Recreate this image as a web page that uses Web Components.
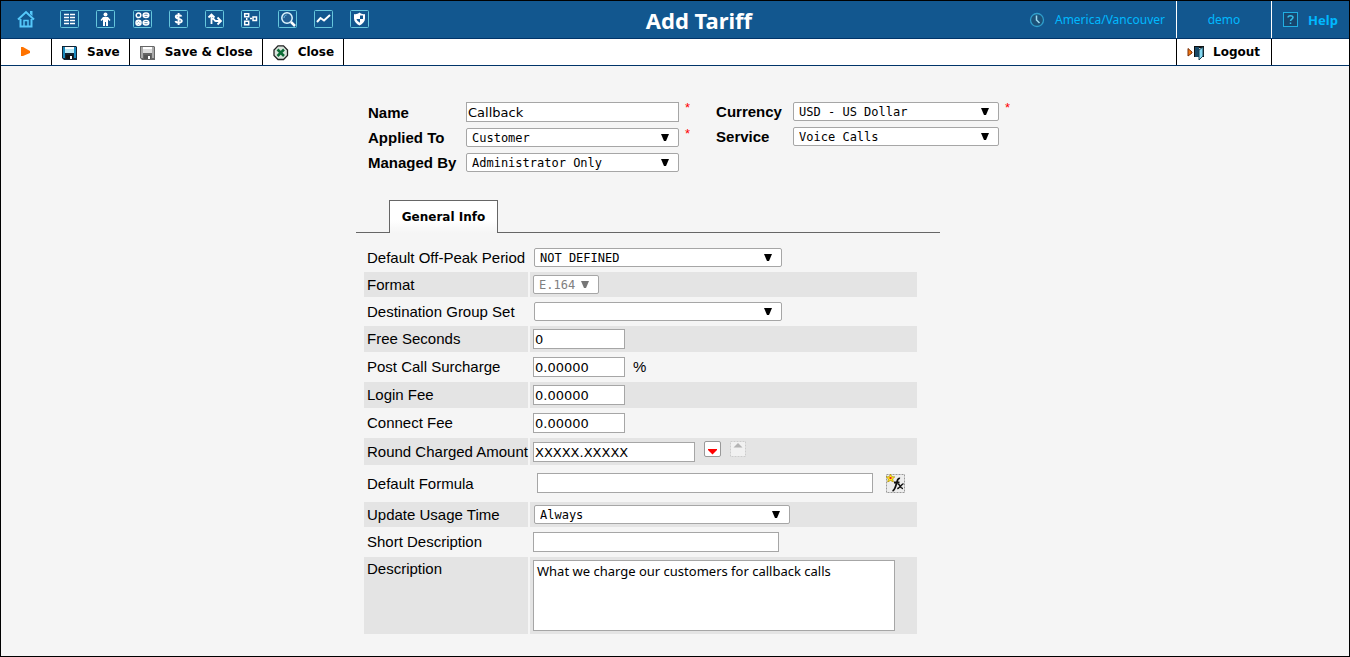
<!DOCTYPE html>
<html lang="en">
<head>
<meta charset="utf-8">
<title>Add Tariff</title>
<style>
body{margin:0;font-family:"Liberation Sans",sans-serif;color:#000}
</style>
</head>
<body>
<tariff-page></tariff-page>
<script>
const S='stroke="#fff" fill="none"';
const BOX='<rect x=".5" y=".5" width="18" height="17" rx="1" fill="none" stroke="#66c6dc"/>';
const ICONS={
 home:[18,18,'<g fill="none" stroke="#55c8fa" stroke-width="2"><path d="M1 9.500 9 2l8 7.500M3.500 9v7.500h11V9"/><path d="M7 16v-5.500h4V16" stroke-width="1.500"/></g><path d="M13 1h2.500v5L13 4z" fill="#55c8fa"/>'],
 list:[19,18,BOX+`<path d="M4 4.500h5M4 7.500h5M4 10.500h5M4 13.500h5M10 4.500h5M10 7.500h5M10 10.500h5M10 13.500h5" stroke-width="1.500" ${S}/>`],
 person:[19,18,BOX+'<circle cx="9.500" cy="4.500" r="2" fill="#fff"/><path d="M7 7h5l2.500 3-1 1L12 9.500V16h-2v-4H9v4H7V9.500L5.500 11l-1-1z" fill="#fff"/>'],
 modules:[19,18,BOX+`<g ${S} stroke-width="1.500"><circle cx="5.500" cy="5.300" r="2.300"/><ellipse cx="13" cy="5.300" rx="2.800" ry="2.200"/><circle cx="5.500" cy="12.800" r="2.500"/><ellipse cx="13" cy="12.800" rx="2.800" ry="2.200"/><path d="M11 5.300h4M11 12.800h4M4 11.300l3 3M7 11.300l-3 3"/></g>`],
 money:[19,18,BOX+`<path d="M12.500 6.500C12 5 7 4.600 6.800 6.700c0 2.700 6 1.500 6 4.200 0 2.500-5.800 2.200-6.300.2M9.600 3v12" stroke-width="1.900" ${S}/>`],
 route:[19,18,BOX+`<path d="M6.500 14V5M3.500 7.500l3-3 3 3M7 8.500c3 0 2 2.500 4 2.500h4M12.500 7.500 16 11l-3.500 3.500" stroke-width="1.800" ${S}/>`],
 network:[19,18,BOX+`<g ${S} stroke-width="1.500"><path d="M3.700 3.700h4v3h-4zM3.700 11.200h4v3.500h-4zM12 7h3.500v3.500H12zM5.700 8v2M9 8.500h2"/></g>`],
 search:[19,18,BOX+'<circle cx="9" cy="8" r="5.200" stroke="#dff6ff" stroke-width="1.500" fill="#245f94"/><path d="m13 12 4 4" stroke="#fff" stroke-width="2.500"/><path d="M6 8c.2-2 1-2.700 2.500-3" stroke="#7ac8e8" fill="none"/>'],
 chart:[19,18,BOX+`<path d="m3 12 3.500-4 3.500 2.500L16 5" stroke-width="2" ${S}/>`],
 shield:[19,18,BOX+'<path d="M9.500 2.500C8 4 5.500 4.500 4 4v4.500c0 3 2.500 5.500 5.500 7 3-1.500 5.500-4 5.500-7V4c-1.500.5-4 0-5.500-1.500z" fill="#fff"/><path d="M10 5.500h3V9h-3zM6.500 9H10v3.800C8 11.500 6.800 10.500 6.500 9z" fill="#12578f"/>'],
 clock:[16,16,'<circle cx="8" cy="8" r="6.500" fill="#1c5279" stroke="#2f9fcc" stroke-width="1.300"/><path d="M7.500 3.500V8l3 3" fill="none" stroke="#9cdcf2" stroke-width="1.500"/>'],
 help:[15,15,'<rect x=".5" y=".5" width="14" height="14" fill="#17466f" stroke="#21aee2"/><path d="M5 5.500C5 3 10 3 10 5.500c0 1.500-2.500 1.700-2.500 3.500M7.500 10.500v1.500" fill="none" stroke="#35bde9" stroke-width="1.500"/>'],
 play:[11,10,'<path d="M1 0h2l7 4v2l-7 3H1z" fill="#ff7300"/>'],
 save:[16,16,'<path d="M0 1h14l1 1v13H2l-2-2z" fill="#123"/><path d="M1 2h2v11H1z" fill="#1789bd"/><path d="M12 2h2v11h-2z" fill="#1689c0"/><path d="M3 2h9v6H3z" fill="#b9e9f6"/><path d="M3 2h9v2H3z" fill="#fff"/><path d="M4 10h7v4H4z" fill="#111"/><path d="M8 11h2v3H8z" fill="#fff"/>'],
 savegray:[16,16,'<path d="M0 1h14l1 1v13H2l-2-2z" fill="#666"/><path d="M1 2h2v11H1zM12 2h2v11h-2z" fill="#aaa"/><path d="M3 2h9v6H3z" fill="#ddd"/><path d="M3 2h9v2H3z" fill="#fff"/><path d="M4 10h7v4H4z" fill="#555"/><path d="M8 11h2v3H8z" fill="#fff"/>'],
 close:[16,16,'<path d="M5 .8h5.500L14.500 5v5.500l-4 4H5l-4-4V5z" fill="#d9e4dc" stroke="#222" stroke-width="1.300"/><path d="m4.500 4.500 6.500 6.500M11 4.500 4.500 11" stroke="#0b6b35" stroke-width="2.500"/>'],
 logout:[17,16,'<path d="M1 3.500 5 7v1L1 11z" fill="#f47812" stroke="#792e07"/><path d="M7 1h10v11h-2V3h-2L9 5v7H7z" fill="#111"/><path d="M8 2h4v10H8z" fill="#174968"/><path d="M12 5l4-3v9l-4 4z" fill="#84d8f1" stroke="#1a4354"/>'],
 down:[17,17,'<rect x=".5" y=".5" width="16" height="15" rx="1.500" fill="#fff" stroke="#999"/><path d="M4 8h9v1l-4.500 4.500L4 9z" fill="#f00"/>'],
 up:[16,17,'<rect x=".5" y=".5" width="15" height="15" fill="#f1f1f1" stroke="#ccc" stroke-dasharray="2 1"/><path d="m8 2 4.500 4.500h-9z" fill="#b4b4b4"/>'],
 fx:[19,19,'<rect x=".5" y=".5" width="18" height="18" fill="#ededed" stroke="#999" stroke-dasharray="2 1"/><path d="M4.500 0l1.300 2.700 3 .2-2.200 2 .8 3-2.900-1.500L1.700 8l.7-3L.2 2.900l3-.2z" fill="#fe2" stroke="#a80" stroke-width=".7"/><path d="M3.500 3h2v2h-2z" fill="#e22"/><path d="M14 4.500c-4-1.500-3 11-7.500 12.500M8 8.500h5.500" stroke="#111" stroke-width="1.800" fill="none"/><path d="M11.500 10c3-1 2 5 5.500 4.500M17.500 9.800c-2 0-4 5-6.300 4.700" stroke="#111" stroke-width="1.500" fill="none"/>']
};
const icon=n=>{const[w,h,d]=ICONS[n];return `<svg aria-hidden="true" width="${w}" height="${h}" viewBox="0 0 ${w} ${h}">${d}</svg>`};
const define=(name,render)=>customElements.define(name,class extends HTMLElement{
  connectedCallback(){
    if(this.shadowRoot)return;
    const t=document.createElement('template');
    t.innerHTML=render(this);
    this.attachShadow({mode:'open'}).append(t.content.cloneNode(true));
  }
});
const esc=v=>(v||'').replace(/&/g,'&amp;').replace(/"/g,'&quot;');

define('nav-icon',e=>`<style>:host{display:block}a{display:block}svg{display:block}</style>
<a href="#" aria-label="${esc(e.getAttribute('label'))}">${icon(e.getAttribute('icon'))}</a>`);

define('tool-button',e=>`<style>
:host{display:block}
button{display:flex;align-items:center;gap:9px;height:100%;margin:0;border:0;padding:1px 9px 0 10px;background:none;font:bold 12px/17px "DejaVu Sans",sans-serif;color:#000;white-space:nowrap}
svg{display:block}
</style><button type="button">${icon(e.getAttribute('icon'))}<slot></slot></button>`);

define('icon-button',e=>`<style>:host{display:block}button{display:block;border:0;margin:0;padding:0;background:none}svg{display:block}</style>
<button type="button" aria-label="${esc(e.getAttribute('label'))}"${e.hasAttribute('disabled')?' disabled':''}>${icon(e.getAttribute('icon'))}</button>`);

define('top-bar',e=>`<style>
:host{display:flex;height:37px;background:#12578f;border-bottom:1px solid #003469;font:12px/18px "Noto Sans",sans-serif;color:#00b9ff}
nav{display:flex;align-items:center;gap:25px;padding:0 0 2px 16px}
.main{display:flex;justify-content:space-between;width:309px}
h1{flex:1;margin:0;align-self:center;text-align:center;font:bold 22px/28px "Noto Sans",sans-serif;color:#fff}
.cell{display:flex;align-items:center;justify-content:center;gap:10px;box-sizing:border-box}
.zone{padding-right:11px}
.user{width:95px;border-left:1px solid #fff}
.help{width:78px;border-left:1px solid #fff;font-size:13px;font-weight:bold}
a{display:flex;align-items:center;gap:10px;color:inherit;text-decoration:none}
svg{display:block}
</style>
<nav aria-label="Main">
<nav-icon icon="home" label="Home"></nav-icon>
<div class="main">${['list','person','modules','money','route','network','search','chart','shield'].map(n=>`<nav-icon icon="${n}" label="${n}"></nav-icon>`).join('')}</div>
</nav>
<h1><slot></slot></h1>
<div class="cell zone">${icon('clock')}<span>America/Vancouver</span></div>
<div class="cell user"><a href="#">demo</a></div>
<div class="cell help"><a href="#">${icon('help')}Help</a></div>`);

define('tool-bar',e=>`<style>
:host{display:flex;height:26px;background:#fff;border-bottom:1px solid #003469}
.start{display:flex;align-items:center;justify-content:center;width:50px;box-sizing:border-box;padding-right:2px}
tool-button{border-left:1px solid #000}
.last{border-right:1px solid #000}
.space{flex:1}
.out{width:94px;border-right:1px solid #000}
.end{width:77px}
</style>
<div class="start">${icon('play')}</div>
<tool-button icon="save">Save</tool-button>
<tool-button icon="savegray">Save &amp; Close</tool-button>
<tool-button class="last" icon="close">Close</tool-button>
<div class="space"></div>
<tool-button class="out" icon="logout">Logout</tool-button>
<div class="end"></div>`);

const arrow=c=>`url("data:image/svg+xml,%3Csvg xmlns='http://www.w3.org/2000/svg' width='8' height='8'%3E%3Cpath d='M0 0h8L5 7H3z' fill='${c}'/%3E%3C/svg%3E")`;
const CONTROL=`
input,select,textarea{box-sizing:border-box;display:block;margin:0;border:1px solid #a6a6a6;border-radius:0;background-color:#fff;color:#000;width:var(--w)}
input{height:20px;padding:0 1px;font:13px/18px "DejaVu Sans",sans-serif}
select{appearance:none;height:19px;padding:1px 5px 0;border-radius:2px;font:12px/16px "DejaVu Sans Mono",monospace;background-image:${arrow('%23000')};background-repeat:no-repeat;background-position:right 9px top 5px}
select:disabled{color:#808080;opacity:1;background-image:${arrow('%23777')}}
textarea{height:71px;padding:1px 3px;font:13px/18px "Noto Sans",sans-serif;resize:none}`;
const control=e=>{
  const type=e.getAttribute('type'),v=esc(e.getAttribute('value'));
  if(type==='select')return `<select id="c"${e.hasAttribute('disabled')?' disabled':''}><option>${v}</option></select>`;
  if(type==='area')return `<textarea id="c">${v}</textarea>`;
  return `<input id="c" type="text" value="${v}">`;
};

define('head-field',e=>`<style>
:host{display:flex;align-items:center}
label{width:var(--label);font:bold 15px/19px "Liberation Sans",sans-serif;white-space:nowrap}
.req{align-self:flex-start;height:12px;margin-left:6px;font:13px/12px "Liberation Sans",sans-serif;color:#f00}
${CONTROL}
</style><label for="c">${e.getAttribute('label')}</label>${control(e)}${e.hasAttribute('required')?'<span class="req">*</span>':''}`);

define('form-row',e=>`<style>
:host{display:grid;grid-template-columns:164px 387px;column-gap:2px;font:15px/18px "Liberation Sans",sans-serif}
:host(:nth-of-type(even)) .cell{background:#e4e4e4}
.cell{display:flex;align-items:center;box-sizing:border-box;padding:3px}
.cell.l{white-space:nowrap}
:host([type=select]:not([disabled])) .v{padding-left:4px}
:host([type=area]) .l{align-items:flex-start}
:host([roomy]) .v{padding:6px 7px 7px}
:host([steps]) .v{padding-top:4px}
${CONTROL}
</style>
<div class="cell l"><label for="c">${e.getAttribute('label')}</label></div>
<div class="cell v">${control(e)}<slot></slot></div>`);

define('tab-strip',e=>`<style>
:host{display:flex;width:584px;height:33px}
.before{width:33px}.after{flex:1}
.before,.after{border-bottom:1px solid #666}
button{box-sizing:border-box;width:109px;margin:0;padding:0;border:1px solid #666;border-bottom:0;background:linear-gradient(#fff 60%,#f5f5f5);font:bold 12px/16px "DejaVu Sans",sans-serif;color:#000}
</style><div class="before"></div><button type="button" role="tab" aria-selected="true"><slot></slot></button><div class="after"></div>`);

define('tariff-form',e=>`<style>
:host{display:block;box-sizing:border-box;width:664px;margin:0 auto;padding:36px 0 22px 13px}
.head{display:flex;gap:26px;padding-left:12px}
.col{display:grid;gap:6px;align-content:start;--label:98px;--w:213px}
.col:first-child{width:323px}
.col+.col{--label:77px;--w:206px}
tab-strip{margin-top:28px}
.rows{display:grid;gap:2px;margin:12px 0 0 8px}
.unit{margin-left:8px}
.steps{display:flex;gap:9px;margin:-6px 0 0 9px}
.fx{margin-left:13px}
</style>
<form>
<div class="head">
<div class="col">
<head-field label="Name" value="Callback" required></head-field>
<head-field label="Applied To" type="select" value="Customer" required></head-field>
<head-field label="Managed By" type="select" value="Administrator Only"></head-field>
</div>
<div class="col">
<head-field label="Currency" type="select" value="USD - US Dollar" required></head-field>
<head-field label="Service" type="select" value="Voice Calls"></head-field>
</div>
</div>
<tab-strip>General Info</tab-strip>
<div class="rows">
<form-row style="--w:248px" label="Default Off-Peak Period" type="select" value="NOT DEFINED"></form-row>
<form-row style="--w:66px" label="Format" type="select" value="E.164" disabled></form-row>
<form-row style="--w:248px" label="Destination Group Set" type="select" value=""></form-row>
<form-row style="--w:92px" label="Free Seconds" value="0"></form-row>
<form-row style="--w:92px" label="Post Call Surcharge" value="0.00000"><span class="unit">%</span></form-row>
<form-row style="--w:92px" label="Login Fee" value="0.00000"></form-row>
<form-row style="--w:92px" label="Connect Fee" value="0.00000"></form-row>
<form-row style="--w:162px" label="Round Charged Amount" value="XXXXX.XXXXX" steps><div class="steps"><icon-button icon="down" label="Fewer decimals"></icon-button><icon-button icon="up" label="More decimals" disabled></icon-button></div></form-row>
<form-row style="--w:336px" label="Default Formula" value="" roomy><icon-button class="fx" icon="fx" label="Formula wizard"></icon-button></form-row>
<form-row style="--w:256px" label="Update Usage Time" type="select" value="Always"></form-row>
<form-row style="--w:246px" label="Short Description" value=""></form-row>
<form-row style="--w:362px" label="Description" type="area" value="What we charge our customers for callback calls"></form-row>
</div>
</form>`);

define('tariff-page',e=>`<style>
:host{display:block;box-sizing:border-box;min-height:100vh;border:1px solid #000;background:#f5f5f5}
</style>
<top-bar>Add Tariff</top-bar>
<tool-bar></tool-bar>
<tariff-form></tariff-form>`);
</script>
</body>
</html>
